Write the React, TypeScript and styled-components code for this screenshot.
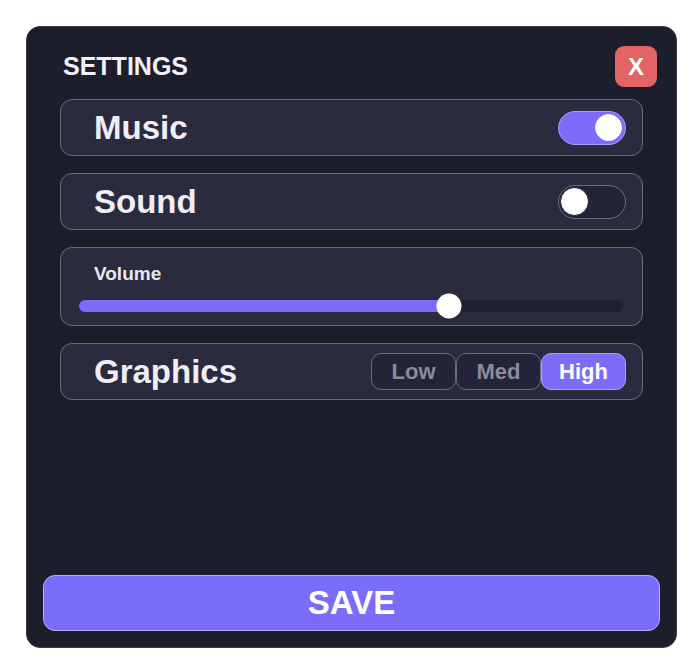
import React, { useState } from 'react';
import styled, { createGlobalStyle } from 'styled-components';

const GlobalStyle = createGlobalStyle`
  body {
    margin: 0;
    background: #ffffff;
    font-family: "Liberation Sans", Arial, sans-serif;
  }
`;

const Panel = styled.div`
  box-sizing: border-box;
  width: 651px;
  height: 622px;
  margin: 26px 0 0 26px;
  padding: 19px 16px 16px;
  background: #1d1e2b;
  border: 1px solid #3a3b48;
  border-radius: 14px;
  display: flex;
  flex-direction: column;
`;

const Header = styled.div`
  display: flex;
  align-items: center;
  justify-content: space-between;
  padding: 0 3px 0 20px;
  margin-bottom: 12px;
`;

const Title = styled.h1`
  margin: 0;
  font-size: 25px;
  font-weight: 700;
  color: #f2f2f7;
`;

const CloseButton = styled.button`
  width: 42px;
  height: 41px;
  border: none;
  border-radius: 9px;
  background: #e36462;
  color: #ffffff;
  font-family: inherit;
  font-size: 24px;
  font-weight: 700;
  padding: 0;
  cursor: pointer;
`;

const Rows = styled.div`
  display: flex;
  flex-direction: column;
  gap: 17px;
  margin: 0 17px;
`;

const Row = styled.div`
  box-sizing: border-box;
  height: 57px;
  display: flex;
  align-items: center;
  justify-content: space-between;
  padding: 0 16px 0 33px;
  background: #2a2b3f;
  border: 1px solid #6a6b7b;
  border-radius: 12px;
`;

const RowLabel = styled.span`
  font-size: 33px;
  font-weight: 700;
  color: #eeeef4;
`;

const Track = styled.button<{ $on: boolean }>`
  box-sizing: border-box;
  width: 68px;
  height: 34px;
  padding: 0 2px;
  border-radius: 17px;
  border: 1px solid ${({ $on }) => ($on ? '#a89ff9' : '#6a6b7b')};
  background: ${({ $on }) => ($on ? '#7c6cf8' : '#23243a')};
  display: flex;
  align-items: center;
  justify-content: ${({ $on }) => ($on ? 'flex-end' : 'flex-start')};
  cursor: pointer;
`;

const Knob = styled.span<{ $on: boolean }>`
  box-sizing: border-box;
  width: ${({ $on }) => ($on ? '27px' : '29px')};
  height: ${({ $on }) => ($on ? '27px' : '29px')};
  border-radius: 50%;
  background: #ffffff;
  border: 1px solid ${({ $on }) => ($on ? '#ffffff' : '#1a1b28')};
  margin-right: ${({ $on }) => ($on ? '1px' : '0')};
  margin-left: ${({ $on }) => ($on ? '0' : '-1px')};
`;

const VolumeRow = styled.div`
  box-sizing: border-box;
  height: 79px;
  padding: 15px 19px 0 18px;
  background: #2a2b3f;
  border: 1px solid #6a6b7b;
  border-radius: 12px;
  display: flex;
  flex-direction: column;
  gap: 15px;
`;

const VolumeLabel = styled.span`
  padding-left: 15px;
  font-size: 19px;
  font-weight: 700;
  color: #e8e8ef;
`;

const SliderTrack = styled.div`
  position: relative;
  height: 12px;
  border-radius: 6px;
  background: #1f2030;
`;

const SliderFill = styled.div`
  height: 100%;
  border-radius: 6px;
  background: #7c6cf8;
`;

const SliderThumb = styled.div`
  position: absolute;
  top: 50%;
  width: 25px;
  height: 25px;
  border-radius: 50%;
  background: #ffffff;
  transform: translate(-50%, -50%);
`;

const Segmented = styled.div`
  display: flex;
`;

const Segment = styled.button<{ $active: boolean }>`
  box-sizing: border-box;
  width: 85px;
  height: 37px;
  padding: 0;
  border-radius: 10px;
  border: 1px solid ${({ $active }) => ($active ? '#a89ff9' : '#6a6b7b')};
  background: ${({ $active }) => ($active ? '#7c6cf8' : '#23243a')};
  color: ${({ $active }) => ($active ? '#ffffff' : '#8a8b9d')};
  font-family: inherit;
  font-size: 22px;
  font-weight: 700;
  cursor: pointer;
`;

const Spacer = styled.div`
  flex: 1;
`;

const SaveButton = styled.button`
  box-sizing: border-box;
  height: 56px;
  width: 100%;
  border-radius: 12px;
  border: 1px solid #b6afff;
  background: #7c6cfa;
  color: #ffffff;
  font-family: inherit;
  font-size: 33px;
  font-weight: 700;
  cursor: pointer;
`;

const Toggle: React.FC<{ on: boolean; onChange: () => void }> = ({ on, onChange }) => (
  <Track $on={on} onClick={onChange}>
    <Knob $on={on} />
  </Track>
);

const App: React.FC = () => {
  const [music, setMusic] = useState(true);
  const [sound, setSound] = useState(false);
  const [volume] = useState(68);
  const [quality, setQuality] = useState('High');

  return (
    <>
      <GlobalStyle />
      <Panel>
        <Header>
          <Title>SETTINGS</Title>
          <CloseButton>X</CloseButton>
        </Header>
        <Rows>
          <Row>
            <RowLabel>Music</RowLabel>
            <Toggle on={music} onChange={() => setMusic(!music)} />
          </Row>
          <Row>
            <RowLabel>Sound</RowLabel>
            <Toggle on={sound} onChange={() => setSound(!sound)} />
          </Row>
          <VolumeRow>
            <VolumeLabel>Volume</VolumeLabel>
            <SliderTrack>
              <SliderFill style={{ width: `${volume}%` }} />
              <SliderThumb style={{ left: `${volume}%` }} />
            </SliderTrack>
          </VolumeRow>
          <Row>
            <RowLabel>Graphics</RowLabel>
            <Segmented>
              {['Low', 'Med', 'High'].map(q => (
                <Segment key={q} $active={quality === q} onClick={() => setQuality(q)}>
                  {q}
                </Segment>
              ))}
            </Segmented>
          </Row>
        </Rows>
        <Spacer />
        <SaveButton>SAVE</SaveButton>
      </Panel>
    </>
  );
};

export default App;
